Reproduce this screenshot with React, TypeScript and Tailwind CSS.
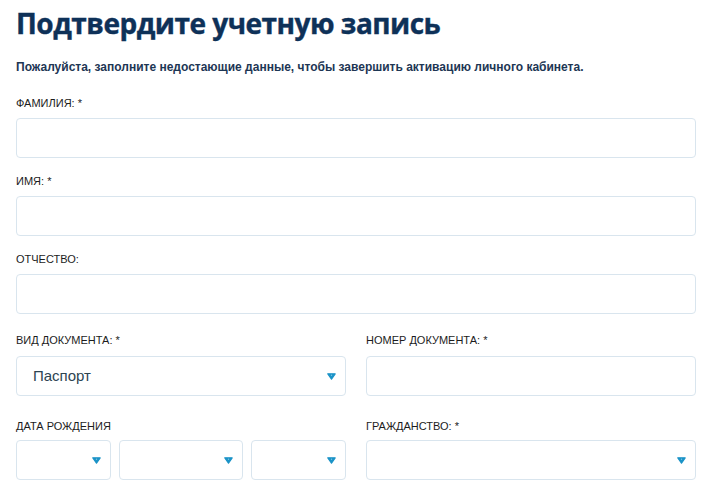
import React from "react";

const Arrow = () => (
  <svg width="9" height="7" viewBox="0 0 9 7" className="shrink-0">
    <path d="M0.8 0.8 H8.2 L4.5 6.2 Z" fill="#1b93c7" stroke="#1b93c7" strokeWidth="1.2" strokeLinejoin="round" />
    <circle cx="4.5" cy="2.2" r="0.7" fill="#7cc4e2" />
  </svg>
);

const Label = ({ children, className = "" }: { children: React.ReactNode; className?: string }) => (
  <div className={`h-[15px] text-[11px] leading-[15px] text-[#1c1c1c] uppercase ${className}`}>{children}</div>
);

const Input = ({ className = "" }: { className?: string }) => (
  <div className={`h-[40px] rounded-[4px] border border-[#d9e5ee] bg-white ${className}`} />
);

const Select = ({ className = "", text }: { className?: string; text?: string }) => (
  <div className={`h-[40px] rounded-[4px] border border-[#d9e5ee] bg-white flex items-center justify-between pl-[16px] pr-[9px] ${className}`}>
    <span className="text-[15px] text-[#2d4452]">{text}</span>
    <Arrow />
  </div>
);

export default function App() {
  return (
    <div className="w-[709px] h-[489px] overflow-hidden bg-white pl-[16px] pr-[13px] pt-[3px] font-['Liberation_Sans',Arial,sans-serif]">
      <h1 className="text-[28px] leading-[40px] font-bold text-[#0e3158] tracking-[-0.5px] font-['Open_Sans',sans-serif] [-webkit-text-stroke:0.4px_#0e3158]">
        Подтвердите учетную запись
      </h1>
      <p className="mt-[17px] text-[12px] leading-[15px] font-bold text-[#1d3654]">
        Пожалуйста, заполните недостающие данные, чтобы завершить активацию личного кабинета.
      </p>

      <Label className="mt-[21px]">Фамилия: *</Label>
      <Input className="mt-[7px]" />

      <Label className="mt-[16px]">Имя: *</Label>
      <Input className="mt-[7px]" />

      <Label className="mt-[16px]">Отчество:</Label>
      <Input className="mt-[7px]" />

      <div className="mt-[19px] flex gap-[20px]">
        <div className="w-[330px]">
          <Label>Вид документа: *</Label>
          <Select className="mt-[8px]" text="Паспорт" />
        </div>
        <div className="flex-1">
          <Label>Номер документа: *</Label>
          <Input className="mt-[8px]" />
        </div>
      </div>

      <div className="mt-[23px] flex gap-[20px]">
        <div className="w-[330px]">
          <Label>Дата рождения</Label>
          <div className="mt-[6px] flex gap-[8px]">
            <Select className="w-[95px]" />
            <Select className="w-[124px]" />
            <Select className="flex-1" />
          </div>
        </div>
        <div className="flex-1">
          <Label>Гражданство: *</Label>
          <Select className="mt-[6px]" />
        </div>
      </div>
    </div>
  );
}
